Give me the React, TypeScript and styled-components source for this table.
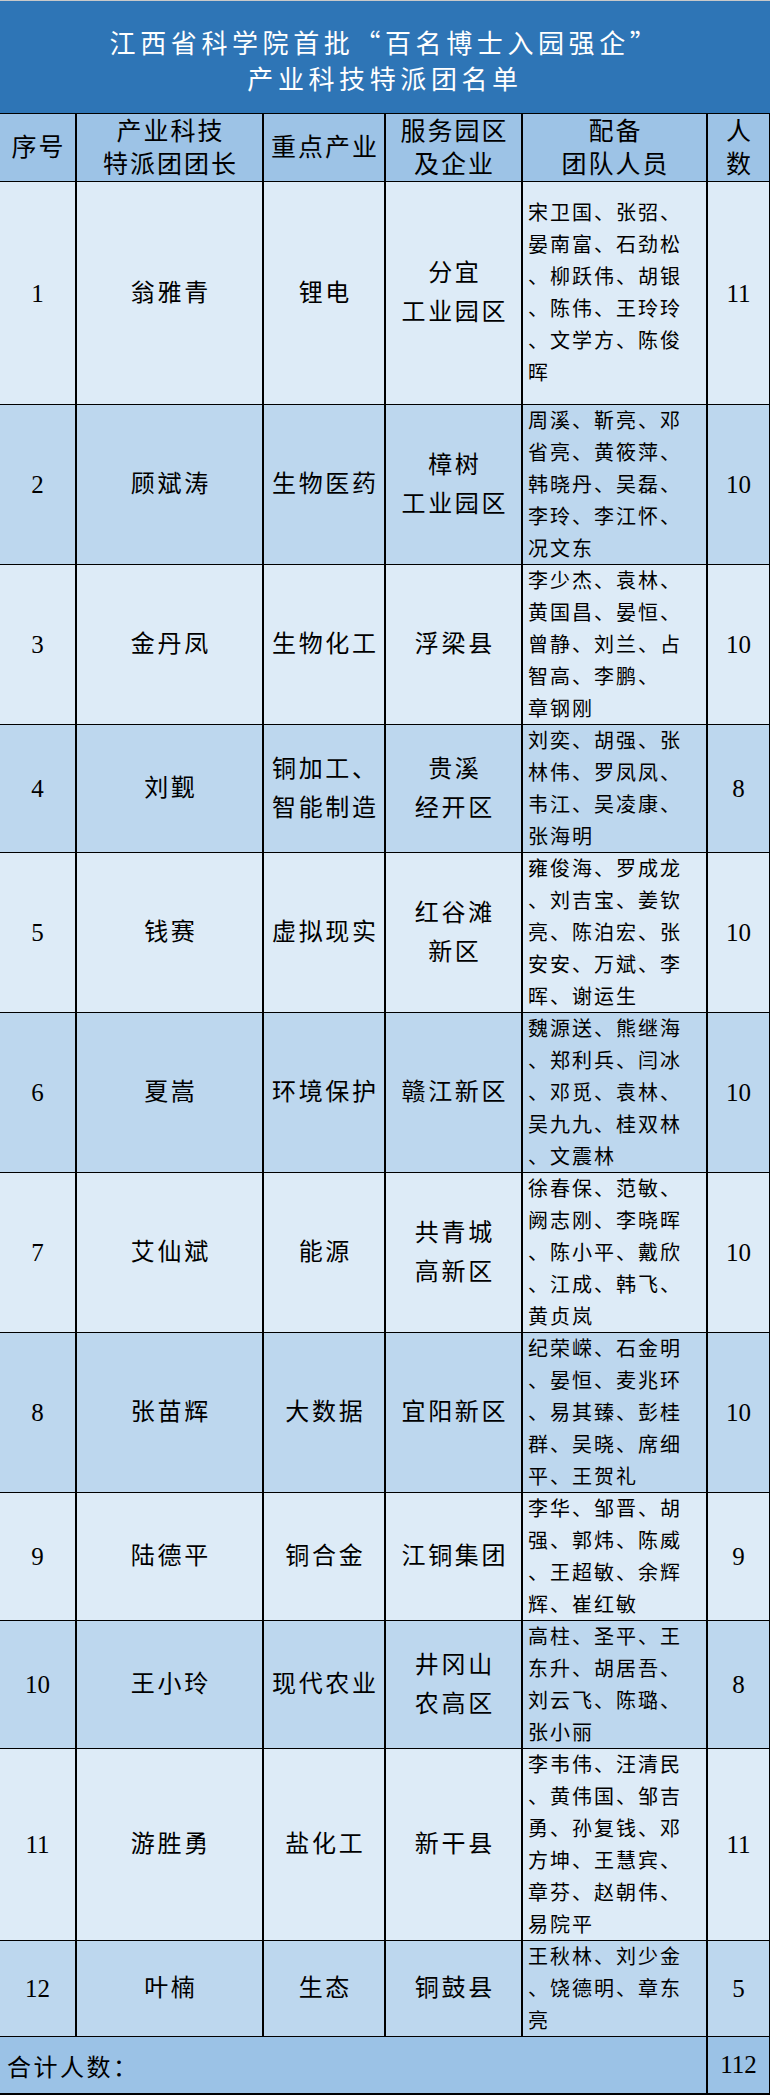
import React from 'react'
import styled, { createGlobalStyle } from 'styled-components'

const GlobalStyle = createGlobalStyle`
  body {
    margin: 0;
    background: #ffffff;
  }
`

const FONT = `"Liberation Serif", "Noto Sans CJK SC", serif`
const CJK = `"Noto Sans CJK SC", "Liberation Serif", serif`
const COLS = '75px 187px 122px 137px 185px 64px'

const LIGHT = '#ddebf7'
const DARK = '#bdd7ee'

const Sheet = styled.div`
  width: 770px;
  font-family: ${FONT};
  color: #000;
`

const TitleBar = styled.div`
  height: 113px;
  box-sizing: border-box;
  border-top: 1px solid #c9c9c9;
  padding-top: 6px;
  background: #2e75b6;
  color: #ffffff;
  display: flex;
  flex-direction: column;
  align-items: center;
  justify-content: center;
  font-family: ${CJK};
  font-size: 26px;
  line-height: 36px;
  letter-spacing: 4.6px;
`

const Row = styled.div<{ $h: number; $bg: string; $top?: boolean }>`
  display: grid;
  grid-template-columns: ${COLS};
  height: ${(p) => p.$h}px;
  box-sizing: border-box;
  background: ${(p) => p.$bg};
  border-bottom: 1.5px solid #000;
  border-top: ${(p) => (p.$top ? '1.5px solid #000' : 'none')};
`

const Cell = styled.div<{ $left?: boolean }>`
  display: flex;
  flex-direction: column;
  align-items: ${(p) => (p.$left ? 'flex-start' : 'center')};
  justify-content: center;
  box-sizing: border-box;
  border-left: 2px solid #000;
  padding-left: ${(p) => (p.$left ? '5px' : '0')};
  text-align: center;
  white-space: nowrap;
  overflow: hidden;

  &:first-child {
    border-left: none;
  }
  &:last-child {
    border-right: 1px solid #000;
  }
`

const HeadText = styled.div`
  font-size: 25px;
  line-height: 33px;
  letter-spacing: 2px;
  padding-left: 2px;
`

const BodyText = styled.div`
  font-size: 24px;
  line-height: 39px;
  letter-spacing: 2.7px;
  padding-left: 2.7px;
`

const Num = styled.div`
  font-size: 25px;
  line-height: 39px;
`

const MemberLine = styled.div`
  font-size: 20px;
  line-height: 32px;
  letter-spacing: 2px;
  text-align: left;
`

const Footer = styled.div`
  display: grid;
  grid-template-columns: 706px 64px;
  height: 58px;
  box-sizing: border-box;
  background: #9bc2e6;
  border-bottom: 2px solid #000;
`

const FooterLabel = styled.div`
  display: flex;
  align-items: center;
  padding-left: 7px;
  font-family: ${CJK};
  font-size: 24px;
  letter-spacing: 2.5px;
`

const FooterTotal = styled.div`
  display: flex;
  align-items: center;
  justify-content: center;
  border-left: 2px solid #000;
  border-right: 1px solid #000;
  font-size: 25px;
`

type Team = {
  no: string
  leader: string
  industry: string[]
  park: string[]
  members: string[]
  count: string
  h: number
}

const teams: Team[] = [
  {
    no: '1',
    leader: '翁雅青',
    industry: ['锂电'],
    park: ['分宜', '工业园区'],
    members: ['宋卫国、张弨、', '晏南富、石劲松', '、柳跃伟、胡银', '、陈伟、王玲玲', '、文学方、陈俊', '晖'],
    count: '11',
    h: 223,
  },
  {
    no: '2',
    leader: '顾斌涛',
    industry: ['生物医药'],
    park: ['樟树', '工业园区'],
    members: ['周溪、靳亮、邓', '省亮、黄筱萍、', '韩晓丹、吴磊、', '李玲、李江怀、', '况文东'],
    count: '10',
    h: 160,
  },
  {
    no: '3',
    leader: '金丹凤',
    industry: ['生物化工'],
    park: ['浮梁县'],
    members: ['李少杰、袁林、', '黄国昌、晏恒、', '曾静、刘兰、占', '智高、李鹏、', '章钢刚'],
    count: '10',
    h: 160,
  },
  {
    no: '4',
    leader: '刘觐',
    industry: ['铜加工、', '智能制造'],
    park: ['贵溪', '经开区'],
    members: ['刘奕、胡强、张', '林伟、罗凤凤、', '韦江、吴凌康、', '张海明'],
    count: '8',
    h: 128,
  },
  {
    no: '5',
    leader: '钱赛',
    industry: ['虚拟现实'],
    park: ['红谷滩', '新区'],
    members: ['雍俊海、罗成龙', '、刘吉宝、姜钦', '亮、陈泊宏、张', '安安、万斌、李', '晖、谢运生'],
    count: '10',
    h: 160,
  },
  {
    no: '6',
    leader: '夏嵩',
    industry: ['环境保护'],
    park: ['赣江新区'],
    members: ['魏源送、熊继海', '、郑利兵、闫冰', '、邓觅、袁林、', '吴九九、桂双林', '、文震林'],
    count: '10',
    h: 160,
  },
  {
    no: '7',
    leader: '艾仙斌',
    industry: ['能源'],
    park: ['共青城', '高新区'],
    members: ['徐春保、范敏、', '阙志刚、李晓晖', '、陈小平、戴欣', '、江成、韩飞、', '黄贞岚'],
    count: '10',
    h: 160,
  },
  {
    no: '8',
    leader: '张苗辉',
    industry: ['大数据'],
    park: ['宜阳新区'],
    members: ['纪荣嵘、石金明', '、晏恒、麦兆环', '、易其臻、彭桂', '群、吴晓、席细', '平、王贺礼'],
    count: '10',
    h: 160,
  },
  {
    no: '9',
    leader: '陆德平',
    industry: ['铜合金'],
    park: ['江铜集团'],
    members: ['李华、邹晋、胡', '强、郭炜、陈威', '、王超敏、余辉', '辉、崔红敏'],
    count: '9',
    h: 128,
  },
  {
    no: '10',
    leader: '王小玲',
    industry: ['现代农业'],
    park: ['井冈山', '农高区'],
    members: ['高柱、圣平、王', '东升、胡居吾、', '刘云飞、陈璐、', '张小丽'],
    count: '8',
    h: 128,
  },
  {
    no: '11',
    leader: '游胜勇',
    industry: ['盐化工'],
    park: ['新干县'],
    members: ['李韦伟、汪清民', '、黄伟国、邹吉', '勇、孙复钱、邓', '方坤、王慧宾、', '章芬、赵朝伟、', '易院平'],
    count: '11',
    h: 192,
  },
  {
    no: '12',
    leader: '叶楠',
    industry: ['生态'],
    park: ['铜鼓县'],
    members: ['王秋林、刘少金', '、饶德明、章东', '亮'],
    count: '5',
    h: 96,
  },
]

const headers: string[][] = [
  ['序号'],
  ['产业科技', '特派团团长'],
  ['重点产业'],
  ['服务园区', '及企业'],
  ['配备', '团队人员'],
  ['人', '数'],
]

const Lines = ({ lines }: { lines: string[] }) => (
  <>
    {lines.map((line, i) => (
      <BodyText key={i}>{line}</BodyText>
    ))}
  </>
)

const App = () => {
  const total = teams.reduce((sum, t) => sum + Number(t.count), 0)

  return (
    <Sheet>
      <GlobalStyle />
      <TitleBar>
        <div>江西省科学院首批“百名博士入园强企”</div>
        <div>产业科技特派团名单</div>
      </TitleBar>

      <Row $h={69} $bg="#9dc3e6" $top>
        {headers.map((h, i) => (
          <Cell key={i}>
            {h.map((line) => (
              <HeadText key={line}>{line}</HeadText>
            ))}
          </Cell>
        ))}
      </Row>

      {teams.map((t, i) => (
        <Row key={t.no} $h={t.h} $bg={i % 2 === 0 ? LIGHT : DARK}>
          <Cell>
            <Num>{t.no}</Num>
          </Cell>
          <Cell>
            <BodyText>{t.leader}</BodyText>
          </Cell>
          <Cell>
            <Lines lines={t.industry} />
          </Cell>
          <Cell>
            <Lines lines={t.park} />
          </Cell>
          <Cell $left>
            {t.members.map((m, j) => (
              <MemberLine key={j}>{m}</MemberLine>
            ))}
          </Cell>
          <Cell>
            <Num>{t.count}</Num>
          </Cell>
        </Row>
      ))}

      <Footer>
        <FooterLabel>合计人数：</FooterLabel>
        <FooterTotal>{total}</FooterTotal>
      </Footer>
    </Sheet>
  )
}

export default App
